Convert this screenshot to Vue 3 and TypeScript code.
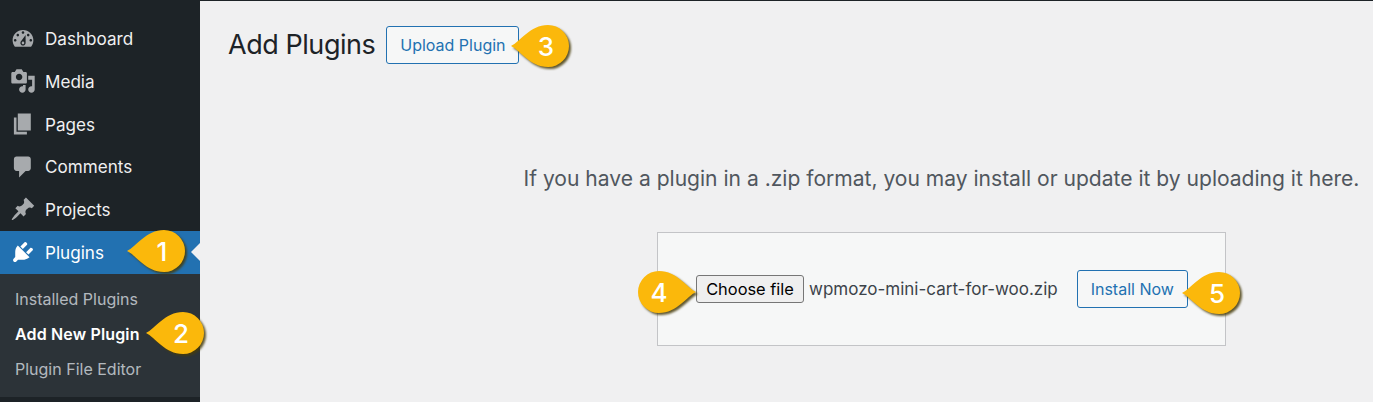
<template>
  <div class="page">
    <aside class="sidebar">
      <ul class="menu">
        <li v-for="item in menu" :key="item.label" class="menu-item" :class="{ current: item.current }">
          <svg class="menu-icon" viewBox="0 0 20 20"><path :d="item.icon" /></svg>
          <span>{{ item.label }}</span>
        </li>
      </ul>
      <ul class="submenu">
        <li v-for="sub in submenu" :key="sub.label" :class="{ active: sub.active }">{{ sub.label }}</li>
      </ul>
    </aside>

    <main class="content">
      <header class="page-head">
        <h1>Add Plugins</h1>
        <a class="btn upload-btn">Upload Plugin</a>
      </header>
      <section class="upload">
        <p>If you have a plugin in a .zip format, you may install or update it by uploading it here.</p>
        <form class="upload-form" @submit.prevent>
          <button class="file-btn" type="button">Choose file</button>
          <span class="file-name">wpmozo-mini-cart-for-woo.zip</span>
          <a class="btn install-btn">Install Now</a>
        </form>
      </section>
    </main>

    <div
      v-for="b in badges"
      :key="b.n"
      class="badge"
      :class="{ flip: b.flip }"
      :style="{ left: b.x + 'px', top: b.y + 'px' }"
    >
      <svg viewBox="0 0 58 42" width="58" height="42"><path d="M0 21C9 17 19 0 37 0a21 21 0 0 1 0 42C19 42 9 25 0 21Z" /></svg>
      <span>{{ b.n }}</span>
    </div>
  </div>
</template>

<script setup lang="ts">
const menu = [
  { label: 'Dashboard', icon: 'M3.76 16h12.48c1.1-1.37 1.76-3.11 1.76-5 0-4.42-3.58-8-8-8s-8 3.58-8 8c0 1.89.66 3.63 1.76 5zM10 4c.55 0 1 .45 1 1s-.45 1-1 1-1-.45-1-1 .45-1 1-1zM6 6c.55 0 1 .45 1 1s-.45 1-1 1-1-.45-1-1 .45-1 1-1zm8 0c.55 0 1 .45 1 1s-.45 1-1 1-1-.45-1-1 .45-1 1-1zm-5.37 5.55L12 7v6c0 1.1-.9 2-2 2s-2-.9-2-2c0-.57.24-1.08.63-1.45zM4 10c.55 0 1 .45 1 1s-.45 1-1 1-1-.45-1-1 .45-1 1-1zm12 0c.55 0 1 .45 1 1s-.45 1-1 1-1-.45-1-1 .45-1 1-1zm-5 3c0-.55-.45-1-1-1s-1 .45-1 1 .45 1 1 1 1-.45 1-1z' },
  { label: 'Media', icon: 'M13 11V4c0-.55-.45-1-1-1h-1.67L9 1H5L3.67 3H2c-.55 0-1 .45-1 1v7c0 .55.45 1 1 1h10c.55 0 1-.45 1-1zM7 4.5c1.38 0 2.5 1.12 2.5 2.5S8.38 9.5 7 9.5 4.5 8.38 4.5 7 5.62 4.5 7 4.5zM14 6h5v10.5c0 1.38-1.12 2.5-2.5 2.5S14 17.88 14 16.5s1.12-2.5 2.5-2.5c.17 0 .34.02.5.05V9h-3V6zm-4 8.05V13h2v3.5c0 1.38-1.12 2.5-2.5 2.5S7 17.88 7 16.5 8.12 14 9.5 14c.17 0 .34.02.5.05z' },
  { label: 'Pages', icon: 'M6 15V2h10v13H6zm-1 1h8v2H3V5h2v11z' },
  { label: 'Comments', icon: 'M5 2h9c1.1 0 2 .9 2 2v7c0 1.1-.9 2-2 2h-2l-5 5v-5H5c-1.1 0-2-.9-2-2V4c0-1.1.9-2 2-2z' },
  { label: 'Projects', icon: 'M10.44 3.02l1.82-1.82 6.36 6.35-1.83 1.82c-1.05-.68-2.48-.57-3.41.36l-.75.75c-.92.93-1.04 2.35-.35 3.41l-1.83 1.82-2.41-2.41-2.8 2.79c-.42.42-3.38 2.71-3.8 2.29s1.86-3.39 2.28-3.81l2.79-2.79L4.1 9.36l1.83-1.82c1.05.69 2.48.57 3.41-.36l.75-.75c.93-.92 1.04-2.35.35-3.41z' },
  { label: 'Plugins', current: true, icon: 'M13.11 4.36L9.87 7.6 8 5.73l3.24-3.24c.35-.34 1.05-.2 1.56.32.52.51.66 1.21.31 1.55zm-8 1.77l.91-1.12 9.01 9.01-1.19.84c-.71.71-2.63 1.16-3.82 1.16H6.14L4.9 17.26c-.59.59-1.54.59-2.12 0-.59-.58-.59-1.53 0-2.12l1.24-1.24v-3.88c0-1.13.4-3.19 1.09-3.89zm7.26 3.97l3.24-3.24c.34-.35 1.04-.21 1.55.31.52.51.66 1.21.31 1.55l-3.24 3.25z' },
]

const submenu = [
  { label: 'Installed Plugins' },
  { label: 'Add New Plugin', active: true },
  { label: 'Plugin File Editor' },
]

const badges = [
  { n: 1, x: 127, y: 230 },
  { n: 2, x: 146, y: 312 },
  { n: 3, x: 511, y: 25 },
  { n: 4, x: 638, y: 271, flip: true },
  { n: 5, x: 1182, y: 272 },
]
</script>

<style>
html,
body {
  margin: 0;
  background: #f0f0f1;
}
</style>

<style scoped>
.page {
  position: relative;
  display: flex;
  width: 1373px;
  height: 402px;
  overflow: hidden;
  font-family: Inter, "Liberation Sans", sans-serif;
  background: #f0f0f1;
  color: #1d2327;
}

.sidebar {
  flex: 0 0 200px;
  background: #1d2327;
}

ul {
  list-style: none;
  margin: 0;
  padding: 0;
}

.menu {
  padding-top: 17.4px;
}

.menu-item {
  position: relative;
  display: flex;
  align-items: center;
  gap: 9px;
  height: 42.7px;
  padding-left: 10px;
  font-size: 17.1px;
  color: #f0f0f1;
}

.menu-icon {
  width: 26px;
  height: 26px;
  fill: #a7aaad;
}

.menu-item.current {
  background: #2271b1;
  color: #fff;
}

.menu-item.current .menu-icon {
  fill: #fff;
}

.menu-item.current::after {
  content: "";
  position: absolute;
  right: 0;
  top: 12px;
  border: 9.5px solid transparent;
  border-right-color: #f0f0f1;
  border-left-width: 0;
}

.submenu {
  background: #2c3338;
  padding: 8px 0 10px 15px;
  font-size: 16px;
  color: rgba(240, 246, 252, 0.7);
}

.submenu li {
  height: 35px;
  line-height: 35px;
}

.submenu li.active {
  color: #fff;
  font-weight: 600;
  letter-spacing: 0.15px;
}

.content {
  flex: 1;
  display: flex;
  flex-direction: column;
  border-top: 1px solid #1d2327;
  padding-left: 28px;
}

.page-head {
  display: flex;
  align-items: center;
  gap: 11px;
  margin-top: 25px;
}

h1 {
  margin: 0;
  font-size: 27px;
  font-weight: 400;
  line-height: 38px;
  letter-spacing: -0.45px;
}

.btn {
  display: flex;
  align-items: center;
  justify-content: center;
  box-sizing: border-box;
  height: 38px;
  border: 1px solid #2271b1;
  border-radius: 3px;
  background: #f6f7f7;
  color: #2271b1;
  font-size: 16px;
}

.upload-btn {
  width: 133px;
}

.install-btn {
  width: 111px;
  margin-left: 19px;
}

.upload {
  align-self: flex-end;
  width: 850px;
  margin: 0 6.5px 0 0;
  display: flex;
  flex-direction: column;
  align-items: center;
}

.upload p {
  margin: 101px 0 0;
  font-size: 21.05px;
  line-height: 28px;
  color: #50575e;
  white-space: nowrap;
}

.upload-form {
  box-sizing: border-box;
  width: 569px;
  height: 114px;
  margin-top: 39px;
  padding: 0 0 1px 38px;
  display: flex;
  align-items: center;
  background: #f6f7f7;
  border: 1px solid #c3c4c7;
}

.file-btn {
  box-sizing: border-box;
  width: 108px;
  height: 28px;
  padding: 0;
  border: 1px solid #767676;
  border-radius: 3px;
  background: #efefef;
  color: #000;
  font: 400 16.4px Inter, "Liberation Sans", sans-serif;
}

.file-name {
  margin-left: 5px;
  font-size: 17px;
  color: #3c434a;
  white-space: nowrap;
}

.badge {
  position: absolute;
  width: 58px;
  height: 42px;
}

.badge svg {
  display: block;
  fill: #fbb80b;
  filter: drop-shadow(2px 2px 1px rgba(70, 60, 10, 0.85));
}

.badge.flip svg {
  transform: scaleX(-1);
  filter: drop-shadow(-2px 2px 1px rgba(70, 60, 10, 0.85));
}

.badge span {
  position: absolute;
  left: 14px;
  top: 0;
  width: 42px;
  height: 42px;
  display: flex;
  align-items: center;
  justify-content: center;
  color: #fff;
  font-size: 26px;
  font-weight: 500;
}

.badge.flip span {
  left: 0;
}
</style>
